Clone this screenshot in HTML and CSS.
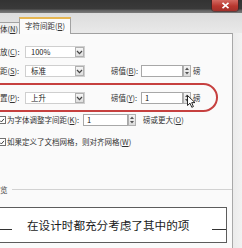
FILE: index.html
```html
<!DOCTYPE html>
<html>
<head>
<meta charset="utf-8">
<link rel="stylesheet" href="styles.css">
</head>
<body>
<div class="win">
  <div class="titlebar">
    <div class="close"><svg width="9" height="7" viewBox="0 0 9 7"><path d="M1.5 0.8 L7.5 6.2 M7.5 0.8 L1.5 6.2" stroke="#fff" stroke-width="1.6"/></svg></div>
  </div>
  <div class="tabs">
    <div class="tab">体(<u>N</u>)</div>
    <div class="tab active">字符间距(<u>R</u>)</div>
  </div>
  <div class="body">
    <div class="panel">
      <div class="row r1">
        <span class="lbl">放(<u>C</u>):</span>
        <div class="select"><span>100%</span><i class="dd"><svg width="7" height="5" viewBox="0 0 7 5"><path d="M1 1 L3.5 3.6 L6 1" fill="none" stroke="#444" stroke-width="1.3"/></svg></i></div>
      </div>
      <div class="row r2">
        <span class="lbl">距(<u>S</u>):</span>
        <div class="select"><span>标准</span><i class="dd"><svg width="7" height="5" viewBox="0 0 7 5"><path d="M1 1 L3.5 3.6 L6 1" fill="none" stroke="#444" stroke-width="1.3"/></svg></i></div>
        <span class="lbl2">磅值(<u>B</u>):</span>
        <div class="input"></div>
        <div class="spin"><svg width="6" height="10" viewBox="0 0 6 10"><path d="M3 1.5 L5 4 L1 4 Z M1 6 L5 6 L3 8.5 Z" fill="#555"/></svg></div>
        <span class="unit">磅</span>
      </div>
      <div class="row r3">
        <span class="lbl">置(<u>P</u>):</span>
        <div class="select"><span>上升</span><i class="dd"><svg width="7" height="5" viewBox="0 0 7 5"><path d="M1 1 L3.5 3.6 L6 1" fill="none" stroke="#444" stroke-width="1.3"/></svg></i></div>
        <span class="lbl2">磅值(<u>Y</u>):</span>
        <div class="input"><span>1</span></div>
        <div class="spin"><svg width="6" height="10" viewBox="0 0 6 10"><path d="M3 1.5 L5 4 L1 4 Z M1 6 L5 6 L3 8.5 Z" fill="#555"/></svg></div>
        <span class="unit">磅</span>
      </div>
      <div class="row r4">
        <span class="chk"><svg width="7" height="7" viewBox="0 0 7 7"><path d="M1.2 3.6 L2.8 5.2 L5.8 1.6" fill="none" stroke="#333" stroke-width="1.1"/></svg></span>
        <span class="lbl4">为字体调整字间距(<u>K</u>):</span>
        <div class="input in4"><span>1</span></div>
        <div class="spin"><svg width="6" height="10" viewBox="0 0 6 10"><path d="M3 1.5 L5 4 L1 4 Z M1 6 L5 6 L3 8.5 Z" fill="#555"/></svg></div>
        <span class="unit4">磅或更大(<u>O</u>)</span>
      </div>
      <div class="row r5">
        <span class="chk"><svg width="7" height="7" viewBox="0 0 7 7"><path d="M1.2 3.6 L2.8 5.2 L5.8 1.6" fill="none" stroke="#333" stroke-width="1.1"/></svg></span>
        <span class="lbl5">如果定义了文档网格，则对齐网格(<u>W</u>)</span>
      </div>
      <div class="sec">
        <span class="sec-lbl">览</span>
        <span class="sec-line"></span>
      </div>
      <div class="preview">
        <span class="pline pl-left"></span>
        <span class="ptext">在设计时都充分考虑了其中的项</span>
        <span class="pfill"></span>
        <span class="pline pl-right"></span>
      </div>
      <div class="ring"></div>
      <svg class="cursor" width="9" height="13" viewBox="0 0 9 13"><path d="M0.5 0.5 L0.5 10.5 L3 8.2 L4.8 12.3 L6.4 11.6 L4.7 7.6 L8 7.6 Z" fill="#fff" stroke="#111" stroke-width="0.9" stroke-linejoin="round"/></svg>
    </div>
    <div class="edge"></div>
  </div>
</div>
</body>
</html>
```

FILE: styles.css
```css
html, body {
  margin: 0;
  padding: 0;
}
body {
  width: 242px;
  height: 248px;
  overflow: hidden;
  background: #e6e6e6;
  font-family: "Noto Sans CJK SC", "Liberation Sans", sans-serif;
  font-size: 7.5px;
  color: #333;
}
u {
  text-decoration: underline;
  text-underline-offset: 1px;
}
.win {
  width: 242px;
  height: 248px;
  display: flex;
  flex-direction: column;
}
.titlebar {
  height: 13px;
  flex: none;
  background: linear-gradient(to bottom, #333 0, #3a3a3a 9px, #5c5c5c 10px, #7a7a7a 13px);
  display: flex;
  justify-content: flex-end;
  align-items: flex-start;
  padding-right: 4px;
}
.close {
  width: 26px;
  height: 11px;
  background: linear-gradient(to bottom, #d46a62 0, #b8372f 55%, #a3302a 100%);
  border-radius: 0 0 3px 3px;
  display: flex;
  align-items: center;
  justify-content: center;
  box-shadow: 0 0 0 1px rgba(80, 20, 20, 0.5);
}
.tabs {
  height: 20px;
  flex: none;
  display: flex;
  align-items: flex-end;
  background: linear-gradient(to bottom, #dcdcdc, #e9e9e9);
  position: relative;
  z-index: 2;
}
.tab {
  height: 12px;
  line-height: 11px;
  width: 20px;
  box-sizing: border-box;
  border: 1px solid #a2a2a2;
  border-bottom: none;
  border-left: none;
  background: #eeeeee;
  margin-bottom: -1px;
  color: #333;
  font-size: 7.5px;
  white-space: nowrap;
  overflow: hidden;
  display: flex;
  justify-content: flex-end;
  padding-right: 1px;
}
.tab.active {
  width: 52px;
  height: 17px;
  line-height: 14px;
  border-top: 2px solid #e6b652;
  border-left: 1px solid #a2a2a2;
  background: #fbfbfb;
  justify-content: center;
  padding-right: 0;
  margin-left: -1px;
}
.body {
  flex: 1;
  display: flex;
}
.panel {
  width: 233px;
  box-sizing: border-box;
  background: #fafafa;
  border-top: 1px solid #a0a0a0;
  border-right: 1px solid #a8a8a8;
  position: relative;
  display: flex;
  flex-direction: column;
}
.edge {
  flex: 1;
  background: linear-gradient(to right, #ebebeb, #f2f2f2);
}
.row {
  display: flex;
  align-items: center;
  height: 12px;
  line-height: 12px;
  white-space: nowrap;
}
.r1 { margin-top: 12px; }
.r2 { margin-top: 7px; }
.r3 { margin-top: 15px; }
.r4 { margin-top: 10px; }
.r5 { margin-top: 10px; }
.lbl {
  width: 25px;
  flex: none;
}
.select {
  width: 60px;
  height: 12px;
  box-sizing: border-box;
  border: 1px solid #cfcfcf;
  background: #fff;
  display: flex;
  align-items: center;
  justify-content: space-between;
  padding-left: 5px;
  color: #222;
}
.dd {
  width: 9px;
  height: 10px;
  box-sizing: border-box;
  border: 1px solid #b0b0b0;
  background: linear-gradient(#f6f6f6, #dedede);
  display: flex;
  align-items: center;
  justify-content: center;
}
.lbl2 {
  margin-left: 26px;
  width: 30px;
  flex: none;
}
.input {
  width: 42px;
  height: 12px;
  box-sizing: border-box;
  border: 1px solid #a8a8a8;
  background: #fff;
  display: flex;
  align-items: center;
  padding-left: 3px;
  color: #111;
}
.spin {
  width: 8px;
  height: 12px;
  box-sizing: border-box;
  border: 1px solid #b0b0b0;
  background: linear-gradient(#f4f4f4, #dcdcdc);
  display: flex;
  align-items: center;
  justify-content: center;
}
.unit {
  margin-left: 2px;
}
.chk {
  width: 8px;
  height: 8px;
  box-sizing: border-box;
  margin-left: -2px;
  border: 1px solid #707070;
  background: #fff;
  display: flex;
  align-items: center;
  justify-content: center;
  flex: none;
}
.lbl4 {
  margin-left: 1px;
  width: 76px;
  flex: none;
}
.in4 {
  width: 45px;
}
.unit4 {
  margin-left: 7px;
}
.lbl5 {
  margin-left: 1px;
}
.sec {
  margin-top: 35px;
  height: 12px;
  display: flex;
  align-items: center;
}
.sec-lbl {
  width: 12px;
  color: #444;
}
.sec-line {
  flex: 1;
  height: 1px;
  background: #d2d2d2;
}
.preview {
  margin-top: 12px;
  margin-left: -2px;
  width: 229px;
  height: 36px;
  box-sizing: border-box;
  border: 1px solid #5c5c5c;
  background: #fff;
  display: flex;
  align-items: center;
}
.ptext {
  font-size: 11.6px;
  color: #1a1a1a;
  margin-left: 15px;
  line-height: 14px;
}
.pline {
  height: 1px;
  background: #333;
  margin-top: 9px;
}
.pl-left {
  width: 13px;
}
.pl-right {
  width: 14px;
}
.pfill {
  flex: 1;
}
.ring {
  position: absolute;
  left: -14px;
  top: 49px;
  width: 232px;
  height: 29px;
  box-sizing: border-box;
  border: 2px solid #c6403f;
  border-radius: 15px;
}
.cursor {
  position: absolute;
  left: 187px;
  top: 61px;
}
```
